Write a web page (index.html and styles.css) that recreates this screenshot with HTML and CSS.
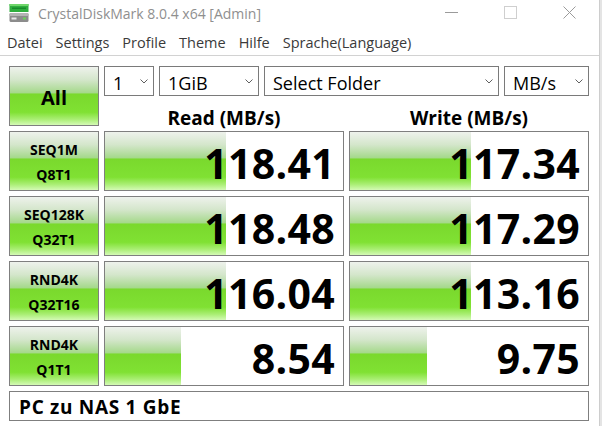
FILE: index.html
```html
<!DOCTYPE html>
<html lang="de">
<head>
<meta charset="utf-8">
<title>CrystalDiskMark 8.0.4 x64 [Admin]</title>
<link rel="stylesheet" href="styles.css">
</head>
<body>
<div class="window">
  <div class="titlebar">
    <svg class="app-icon" width="20" height="20" viewBox="0 0 20 20">
      <rect x="0.5" y="1" width="19" height="8" fill="#2fae3e"/>
      <rect x="0.5" y="1" width="19" height="2" fill="#6fd66a"/>
      <rect x="3" y="4.5" width="14" height="1.5" fill="#178a2a"/>
      <rect x="0.5" y="10" width="19" height="9" rx="1.5" fill="#8c8c8c"/>
      <rect x="0.5" y="10" width="19" height="3" rx="1" fill="#b4b4b4"/>
      <rect x="2.5" y="14.5" width="5" height="2" fill="#e8e8e8"/>
      <rect x="14" y="14.5" width="3" height="2" fill="#6ad35a"/>
    </svg>
    <span class="title">CrystalDiskMark 8.0.4 x64 [Admin]</span>
    <div class="controls">
      <span class="ctl"><svg width="13" height="13" viewBox="0 0 13 13"><line x1="0" y1="6.5" x2="13" y2="6.5" stroke="#9b9b9b" stroke-width="1"/></svg></span>
      <span class="ctl"><svg width="13" height="13" viewBox="0 0 13 13"><rect x="0.5" y="0.5" width="12" height="12" fill="none" stroke="#cfcfcf" stroke-width="1"/></svg></span>
      <span class="ctl"><svg width="13" height="13" viewBox="0 0 13 13"><path d="M0.5 0.5 L12.5 12.5 M12.5 0.5 L0.5 12.5" stroke="#9b9b9b" stroke-width="1"/></svg></span>
    </div>
  </div>
  <div class="menubar">
    <span class="menu-item">Datei</span>
    <span class="menu-item">Settings</span>
    <span class="menu-item">Profile</span>
    <span class="menu-item">Theme</span>
    <span class="menu-item">Hilfe</span>
    <span class="menu-item">Sprache(Language)</span>
  </div>
  <div class="main">
    <div class="btn all">All</div>
    <div class="combos">
      <div class="combo c-count"><span>1</span><svg class="chev" width="8" height="5" viewBox="0 0 8 5"><polyline points="0.5,0.5 4,4 7.5,0.5" fill="none" stroke="#606060" stroke-width="1"/></svg></div>
      <div class="combo c-size"><span>1GiB</span><svg class="chev" width="8" height="5" viewBox="0 0 8 5"><polyline points="0.5,0.5 4,4 7.5,0.5" fill="none" stroke="#606060" stroke-width="1"/></svg></div>
      <div class="combo c-folder"><span>Select Folder</span><svg class="chev" width="8" height="5" viewBox="0 0 8 5"><polyline points="0.5,0.5 4,4 7.5,0.5" fill="none" stroke="#606060" stroke-width="1"/></svg></div>
      <div class="combo c-unit"><span>MB/s</span><svg class="chev" width="8" height="5" viewBox="0 0 8 5"><polyline points="0.5,0.5 4,4 7.5,0.5" fill="none" stroke="#606060" stroke-width="1"/></svg></div>
    </div>
    <div class="head head-read">Read (MB/s)</div>
    <div class="head head-write">Write (MB/s)</div>

    <div class="btn label">SEQ1M<br>Q8T1</div>
    <div class="result"><div class="bar" style="width:121px"></div><span class="val">118.41</span></div>
    <div class="result"><div class="bar" style="width:121px"></div><span class="val">117.34</span></div>

    <div class="btn label">SEQ128K<br>Q32T1</div>
    <div class="result"><div class="bar" style="width:121px"></div><span class="val">118.48</span></div>
    <div class="result"><div class="bar" style="width:121px"></div><span class="val">117.29</span></div>

    <div class="btn label">RND4K<br>Q32T16</div>
    <div class="result"><div class="bar" style="width:121px"></div><span class="val">116.04</span></div>
    <div class="result"><div class="bar" style="width:121px"></div><span class="val">113.16</span></div>

    <div class="btn label">RND4K<br>Q1T1</div>
    <div class="result"><div class="bar" style="width:76px"></div><span class="val">8.54</span></div>
    <div class="result"><div class="bar" style="width:77px"></div><span class="val">9.75</span></div>

    <div class="comment">PC zu NAS 1 GbE</div>
  </div>
</div>
</body>
</html>
```
FILE: styles.css
```css
html, body {
  margin: 0;
  padding: 0;
  background: #ffffff;
}
body {
  width: 605px;
  height: 426px;
  overflow: hidden;
  font-family: "Open Sans", "Noto Sans", sans-serif;
}
.window {
  width: 599px;
  height: 426px;
  border-right: 1px solid #cdcdcd;
  box-shadow: 2px 0 0 #e4e4e4;
  background: #ffffff;
  display: flex;
  flex-direction: column;
}
.titlebar {
  height: 30px;
  display: flex;
  align-items: center;
}
.app-icon {
  margin-left: 9px;
  margin-top: -4px;
  flex: none;
}
.title {
  margin-left: 9px;
  margin-top: -3px;
  font-size: 14px;
  color: #8f8f8f;
  white-space: nowrap;
}
.controls {
  margin-left: auto;
  display: flex;
  align-self: stretch;
}
.ctl {
  width: 59px;
  display: flex;
  align-items: center;
  justify-content: center;
  padding-bottom: 6px;
}
.menubar {
  height: 25px;
  border-bottom: 1px solid #d2d2d2;
  display: flex;
  align-items: center;
  gap: 13px;
  padding-left: 7px;
  font-size: 14.5px;
  color: #3a3a3a;
}
.main {
  padding: 10px 0 0 9px;
  display: grid;
  grid-template-columns: 90px 240px 240px;
  grid-template-rows: 30px 25px 60px 60px 60px 60px 30px;
  column-gap: 5px;
  row-gap: 5px;
}
.btn {
  box-sizing: border-box;
  border: 1px solid #7f7f7f;
  background: linear-gradient(to bottom, #eef2ec 0%, #d4e6cb 22%, #a6d98c 44%, #7ad92d 47%, #80e133 78%, #a9ee73 90%, #d4fab5 100%);
  display: flex;
  align-items: center;
  justify-content: center;
  text-align: center;
  font-weight: 700;
  color: #000;
}
.all {
  grid-row: 1 / span 2;
  grid-column: 1;
  font-size: 20px;
  padding-top: 3px;
}
.label {
  font-size: 14px;
  line-height: 25px;
  padding-top: 1px;
}
.combos {
  grid-row: 1;
  grid-column: 2 / span 2;
  display: flex;
  gap: 5px;
}
.combo {
  box-sizing: border-box;
  border: 1px solid #7a7a7a;
  background: #fff;
  display: flex;
  align-items: center;
  padding: 3px 5px 0 8px;
  font-size: 18px;
  color: #000;
}
.combo span {
  flex: 1;
  white-space: nowrap;
}
.chev {
  flex: none;
  margin-top: -2px;
}
.c-count { width: 50px; }
.c-size { width: 100px; }
.c-folder { width: 235px; }
.c-unit { width: 85px; }
.head {
  grid-row: 2;
  text-align: center;
  font-weight: 700;
  font-size: 19px;
  line-height: 25px;
  padding-top: 5px;
  color: #000;
  white-space: nowrap;
}
.head-read { grid-column: 2; }
.head-write { grid-column: 3; }
.result {
  position: relative;
  box-sizing: border-box;
  border: 1px solid #7f7f7f;
  background: #fff;
  display: flex;
  align-items: center;
  justify-content: flex-end;
  padding: 4px 8px 0 0;
  overflow: hidden;
}
.bar {
  position: absolute;
  left: 0;
  top: 0;
  bottom: 0;
  background: linear-gradient(to bottom, #eef2ec 0%, #d4e6cb 22%, #a6d98c 44%, #7ad92d 47%, #80e133 78%, #a9ee73 90%, #d4fab5 100%);
}
.val {
  position: relative;
  font-size: 41px;
  font-weight: 700;
  line-height: 50px;
  color: #000;
  letter-spacing: 0.3px;
}
.comment {
  grid-row: 7;
  grid-column: 1 / span 3;
  box-sizing: border-box;
  border: 1px solid #7f7f7f;
  display: flex;
  align-items: center;
  padding: 2px 0 0 9px;
  font-size: 19px;
  letter-spacing: 0.7px;
  font-weight: 700;
  color: #000;
}
```
